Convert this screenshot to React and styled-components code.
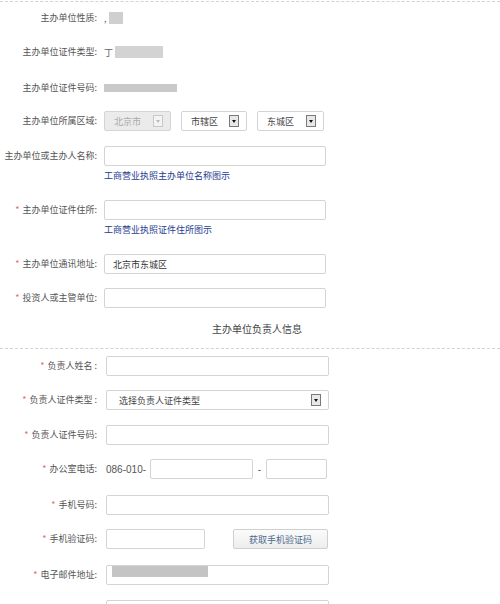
import React from "react";
import styled, { createGlobalStyle } from "styled-components";

const GlobalStyle = createGlobalStyle`
  html, body {
    margin: 0;
    padding: 0;
    background: #fff;
    overflow: hidden;
  }
  body {
    font-family: "Noto Sans CJK SC", "Liberation Sans", sans-serif;
    color: #555;
  }
`;

const Page = styled.div`
  width: 500px;
  padding-top: 1px;
`;

const Section = styled.div`
  border-top: 1px dashed #d2d2d2;
  padding-top: ${(p) => p.$pt}px;
`;

const Field = styled.div`
  display: flex;
  align-items: flex-start;
  margin-bottom: ${(p) => (p.$mb === undefined ? 14 : p.$mb)}px;
`;

const Label = styled.div`
  width: 97px;
  flex-shrink: 0;
  text-align: right;
  font-size: 9px;
  line-height: 20px;
  height: 20px;
  color: #555;
  white-space: nowrap;
`;

const Star = styled.span`
  color: #e06a6a;
  margin-right: 3px;
`;

const Control = styled.div`
  margin-left: ${(p) => p.$gap}px;
  display: flex;
  flex-direction: column;
`;

const Inline = styled.div`
  display: flex;
  align-items: center;
  height: 20px;
  gap: ${(p) => p.$gap || 0}px;
`;

const TextInput = styled.input`
  box-sizing: border-box;
  width: ${(p) => p.$w}px;
  height: 20px;
  margin: 0;
  border: 1px solid #d4d4d4;
  border-radius: 2px;
  padding: 0 8px;
  font-family: inherit;
  font-size: 9px;
  color: #333;
  background: #fff;
  outline: none;
`;

const InputWrap = styled.div`
  position: relative;
  display: flex;
`;

const EmailBlur = styled.div`
  position: absolute;
  left: 6px;
  top: 1px;
  width: 96px;
  height: 11px;
  background: #c4c4c4;
`;

const Select = styled.div`
  box-sizing: border-box;
  width: ${(p) => p.$w}px;
  height: 20px;
  border: 1px solid #d4d4d4;
  border-radius: 2px;
  display: flex;
  align-items: center;
  justify-content: space-between;
  padding: 0 ${(p) => p.$pr || 7}px 0 ${(p) => p.$pl || 9}px;
  font-size: 9px;
  color: ${(p) => (p.$disabled ? "#aaa" : "#444")};
  background: ${(p) => (p.$disabled ? "#ebebeb" : "#fff")};
`;

const Arrow = styled.span`
  box-sizing: border-box;
  width: 10px;
  height: 12px;
  border: 1px solid ${(p) => (p.$disabled ? "#c8c8c8" : "#7a7a7a")};
  background: ${(p) => (p.$disabled ? "#f4f4f4" : "#e8e8e8")};
  display: flex;
  align-items: center;
  justify-content: center;

  &::after {
    content: "";
    border-left: 2.5px solid transparent;
    border-right: 2.5px solid transparent;
    border-top: 3px solid ${(p) => (p.$disabled ? "#bbb" : "#111")};
  }
`;

const Hint = styled.div`
  font-size: 9px;
  line-height: 10px;
  color: #1f3d8f;
  margin-top: 5px;
  margin-bottom: 5px;
`;

const Redacted = styled.div`
  width: ${(p) => p.$w}px;
  height: ${(p) => p.$h}px;
  background: ${(p) => p.$c || "#cfcfcf"};
`;

const Tiny = styled.span`
  font-size: 9px;
  color: #666;
  margin-right: 2px;
`;

const Title = styled.div`
  font-size: 10px;
  line-height: 14px;
  color: #444;
  padding-left: 212px;
  margin-top: 14px;
  margin-bottom: 12px;
`;

const Prefix = styled.span`
  font-family: "Liberation Sans", Arial, sans-serif;
  font-size: 10px;
  color: #555;
`;

const Dash = styled.span`
  font-family: "Liberation Sans", Arial, sans-serif;
  font-size: 10px;
  color: #555;
  width: 13px;
  text-align: center;
`;

const CodeButton = styled.button`
  box-sizing: border-box;
  width: 95px;
  height: 20px;
  margin: 0 0 0 28px;
  border: 1px solid #cfcfcf;
  border-radius: 2px;
  background: linear-gradient(#fbfbfb, #ededed);
  color: #4c6a8c;
  font-family: inherit;
  font-size: 9px;
  padding: 0;
`;

const Req = ({ children }) => (
  <>
    <Star>*</Star>
    {children}
  </>
);

const App = () => {
  return (
    <Page>
      <GlobalStyle />
      <Section $pt={6}>
        <Field>
          <Label>主办单位性质:</Label>
          <Control $gap={7}>
            <Inline>
              <Tiny>,</Tiny>
              <Redacted $w={14} $h={12} />
            </Inline>
          </Control>
        </Field>
        <Field $mb={16}>
          <Label>主办单位证件类型:</Label>
          <Control $gap={7}>
            <Inline>
              <Tiny>丁</Tiny>
              <Redacted $w={48} $h={12} $c="#d3d3d3" />
            </Inline>
          </Control>
        </Field>
        <Field $mb={13}>
          <Label>主办单位证件号码:</Label>
          <Control $gap={7}>
            <Inline>
              <Redacted $w={73} $h={8} $c="#c9c9c9" />
            </Inline>
          </Control>
        </Field>
        <Field $mb={15}>
          <Label>主办单位所属区域:</Label>
          <Control $gap={7}>
            <Inline $gap={10}>
              <Select $w={67} $disabled>
                北京市
                <Arrow $disabled />
              </Select>
              <Select $w={66}>
                市辖区
                <Arrow />
              </Select>
              <Select $w={67}>
                东城区
                <Arrow />
              </Select>
            </Inline>
          </Control>
        </Field>
        <Field>
          <Label>主办单位或主办人名称:</Label>
          <Control $gap={7}>
            <TextInput $w={222} />
            <Hint>工商营业执照主办单位名称图示</Hint>
          </Control>
        </Field>
        <Field>
          <Label>
            <Req>主办单位证件住所:</Req>
          </Label>
          <Control $gap={7}>
            <TextInput $w={222} />
            <Hint>工商营业执照证件住所图示</Hint>
          </Control>
        </Field>
        <Field>
          <Label>
            <Req>主办单位通讯地址:</Req>
          </Label>
          <Control $gap={7}>
            <TextInput $w={222} defaultValue="北京市东城区" />
          </Control>
        </Field>
        <Field $mb={0}>
          <Label>
            <Req>投资人或主管单位:</Req>
          </Label>
          <Control $gap={7}>
            <TextInput $w={222} />
          </Control>
        </Field>
        <Title>主办单位负责人信息</Title>
      </Section>
      <Section $pt={7}>
        <Field>
          <Label>
            <Req>负责人姓名 :</Req>
          </Label>
          <Control $gap={9}>
            <TextInput $w={223} />
          </Control>
        </Field>
        <Field $mb={15}>
          <Label>
            <Req>负责人证件类型 :</Req>
          </Label>
          <Control $gap={9}>
            <Select $w={223} $pl={12}>
              选择负责人证件类型
              <Arrow />
            </Select>
          </Control>
        </Field>
        <Field>
          <Label>
            <Req>负责人证件号码:</Req>
          </Label>
          <Control $gap={9}>
            <TextInput $w={223} />
          </Control>
        </Field>
        <Field $mb={16}>
          <Label>
            <Req>办公室电话:</Req>
          </Label>
          <Control $gap={9}>
            <Inline>
              <Prefix>086-010-</Prefix>
              <TextInput $w={103} style={{ marginLeft: 4 }} />
              <Dash>-</Dash>
              <TextInput $w={61} />
            </Inline>
          </Control>
        </Field>
        <Field>
          <Label>
            <Req>手机号码:</Req>
          </Label>
          <Control $gap={9}>
            <TextInput $w={223} />
          </Control>
        </Field>
        <Field $mb={16}>
          <Label>
            <Req>手机验证码:</Req>
          </Label>
          <Control $gap={9}>
            <Inline>
              <TextInput $w={99} />
              <CodeButton>获取手机验证码</CodeButton>
            </Inline>
          </Control>
        </Field>
        <Field $mb={15}>
          <Label>
            <Req>电子邮件地址:</Req>
          </Label>
          <Control $gap={9}>
            <InputWrap>
              <TextInput $w={223} />
              <EmailBlur />
            </InputWrap>
          </Control>
        </Field>
        <Field>
          <Label>QQ号码:</Label>
          <Control $gap={9}>
            <TextInput $w={223} />
          </Control>
        </Field>
      </Section>
    </Page>
  );
};

export default App;
